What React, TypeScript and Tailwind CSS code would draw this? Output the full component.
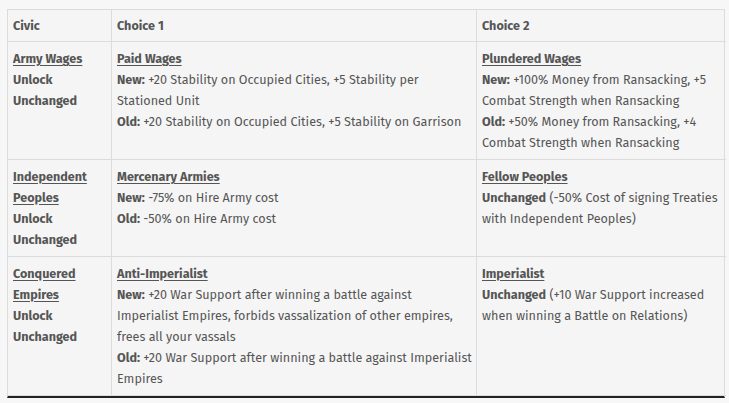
import React from 'react';

type Line = { label?: string; text: string };
type Choice = { title: string; lines: Line[] };
type Row = { civic: string[]; a: Choice; b: Choice };

const rows: Row[] = [
  {
    civic: ['Army Wages'],
    a: {
      title: 'Paid Wages',
      lines: [
        { label: 'New:', text: '+20 Stability on Occupied Cities, +5 Stability per Stationed Unit' },
        { label: 'Old:', text: '+20 Stability on Occupied Cities, +5 Stability on Garrison' },
      ],
    },
    b: {
      title: 'Plundered Wages',
      lines: [
        { label: 'New:', text: '+100% Money from Ransacking, +5 Combat Strength when Ransacking' },
        { label: 'Old:', text: '+50% Money from Ransacking, +4 Combat Strength when Ransacking' },
      ],
    },
  },
  {
    civic: ['Independent', 'Peoples'],
    a: {
      title: 'Mercenary Armies',
      lines: [
        { label: 'New:', text: '-75% on Hire Army cost' },
        { label: 'Old:', text: '-50% on Hire Army cost' },
      ],
    },
    b: {
      title: 'Fellow Peoples',
      lines: [{ label: 'Unchanged', text: '(-50% Cost of signing Treaties with Independent Peoples)' }],
    },
  },
  {
    civic: ['Conquered', 'Empires'],
    a: {
      title: 'Anti-Imperialist',
      lines: [
        {
          label: 'New:',
          text: '+20 War Support after winning a battle against Imperialist Empires, forbids vassalization of other empires, frees all your vassals',
        },
        { label: 'Old:', text: '+20 War Support after winning a battle against Imperialist Empires' },
      ],
    },
    b: {
      title: 'Imperialist',
      lines: [{ label: 'Unchanged', text: '(+10 War Support increased when winning a Battle on Relations)' }],
    },
  },
];

const ChoiceCell = ({ choice, last }: { choice: Choice; last?: boolean }) => (
  <div className={`py-[6px] pl-[5px] pr-[2px] border-b border-[#dcdcdc] ${last ? '' : 'border-r'}`}>
    <div className="font-bold underline underline-offset-2">{choice.title}</div>
    {choice.lines.map((l, i) => (
      <div key={i}>
        {l.label && <span className="font-bold">{l.label}</span>} {l.text}
      </div>
    ))}
  </div>
);

export default function App() {
  return (
    <div
      className="w-[729px] h-[403px] bg-[#f7f7f7] pt-[9px] pl-[7px] text-[12.6px] leading-[21px] text-[#555]"
      style={{ fontFamily: '"Fira Sans", "Noto Sans", sans-serif' }}
    >
      <div className="w-[718px] grid grid-cols-[104px_365px_249px] border-t border-l border-r border-[#dcdcdc] border-b-2 border-b-[#222] bg-[#f5f5f5]">
        {/* header */}
        <div className="h-[32px] flex items-center px-[5px] font-bold border-r border-b border-[#dcdcdc]">Civic</div>
        <div className="h-[32px] flex items-center px-[5px] font-bold border-r border-b border-[#dcdcdc]">Choice 1</div>
        <div className="h-[32px] flex items-center px-[5px] font-bold border-b border-[#dcdcdc]">Choice 2</div>

        {rows.map((r, i) => (
          <React.Fragment key={i}>
            <div className="py-[6px] px-[5px] border-r border-b border-[#dcdcdc] font-bold">
              {r.civic.map((c) => (
                <div key={c} className="underline underline-offset-2">{c}</div>
              ))}
              <div>Unlock</div>
              <div>Unchanged</div>
            </div>
            <ChoiceCell choice={r.a} />
            <ChoiceCell choice={r.b} last />
          </React.Fragment>
        ))}
      </div>
    </div>
  );
}
